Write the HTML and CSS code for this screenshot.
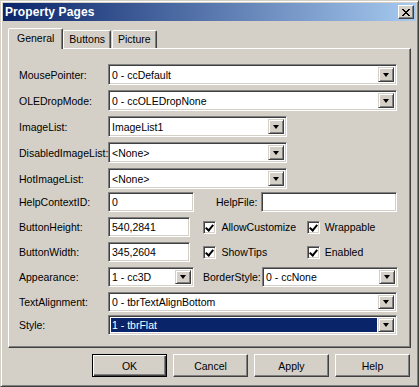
FILE: index.html
```html
<!DOCTYPE html>
<html lang="en">
<head>
  <meta charset="UTF-8" />
  <title>Property Pages</title>
  <link rel="stylesheet" href="styles.css">
</head>
<body>
  <div class="window">
    <div class="titlebar">
      <span class="title">Property Pages</span>
      <div class="close">
        <svg width="8" height="7" viewBox="0 0 8 7" shape-rendering="crispEdges">
          <path d="M0 0h2v1h-2zM6 0h2v1h-2zM1 1h2v1h-2zM5 1h2v1h-2zM2 2h4v1h-4zM3 3h2v1h-2zM2 4h4v1h-4zM1 5h2v1h-2zM5 5h2v1h-2zM0 6h2v1h-2zM6 6h2v1h-2z" fill="#000"/>
        </svg>
      </div>
    </div>

    <div class="content">
      <div class="tabs">
        <div class="tab active">General</div>
        <div class="tab">Buttons</div>
        <div class="tab">Picture</div>
      </div>

      <div class="panel">
        <div class="row">
          <label class="lbl">MousePointer:</label>
          <div class="field combo w-full"><span class="val">0 - ccDefault</span><span class="drop"></span></div>
        </div>
        <div class="row">
          <label class="lbl">OLEDropMode:</label>
          <div class="field combo w-full"><span class="val">0 - ccOLEDropNone</span><span class="drop"></span></div>
        </div>
        <div class="row">
          <label class="lbl">ImageList:</label>
          <div class="field combo w-mid"><span class="val">ImageList1</span><span class="drop"></span></div>
        </div>
        <div class="row">
          <label class="lbl">DisabledImageList:</label>
          <div class="field combo w-mid"><span class="val">&lt;None&gt;</span><span class="drop"></span></div>
        </div>
        <div class="row">
          <label class="lbl">HotImageList:</label>
          <div class="field combo w-mid"><span class="val">&lt;None&gt;</span><span class="drop"></span></div>
        </div>
        <div class="row short pull">
          <label class="lbl">HelpContextID:</label>
          <div class="field w-small"><span class="val">0</span></div>
          <label class="lbl-mid">HelpFile:</label>
          <div class="field w-right"><span class="val"></span></div>
        </div>
        <div class="row short">
          <label class="lbl">ButtonHeight:</label>
          <div class="field w-small"><span class="val">540,2841</span></div>
          <div class="check first"><span class="box"></span>AllowCustomize</div>
          <div class="check"><span class="box"></span>Wrappable</div>
        </div>
        <div class="row short">
          <label class="lbl">ButtonWidth:</label>
          <div class="field w-small"><span class="val">345,2604</span></div>
          <div class="check first"><span class="box"></span>ShowTips</div>
          <div class="check"><span class="box"></span>Enabled</div>
        </div>
        <div class="row short">
          <label class="lbl">Appearance:</label>
          <div class="field combo w-small"><span class="val">1 - cc3D</span><span class="drop"></span></div>
          <label class="lbl-border">BorderStyle:</label>
          <div class="field combo w-right"><span class="val">0 - ccNone</span><span class="drop"></span></div>
        </div>
        <div class="row short">
          <label class="lbl">TextAlignment:</label>
          <div class="field combo w-full"><span class="val">0 - tbrTextAlignBottom</span><span class="drop"></span></div>
        </div>
        <div class="row short pull">
          <label class="lbl">Style:</label>
          <div class="field combo w-full"><span class="val selected">1 - tbrFlat</span><span class="drop"></span></div>
        </div>
      </div>

      <div class="actions">
        <button class="btn default">OK</button>
        <button class="btn">Cancel</button>
        <button class="btn">Apply</button>
        <button class="btn">Help</button>
      </div>
    </div>
  </div>
</body>
</html>
```

FILE: styles.css
```css
* {
  margin: 0;
  padding: 0;
  box-sizing: border-box;
}

body {
  background: #d4d0c8;
  font-family: 'Liberation Sans', Arial, sans-serif;
  font-size: 10.5px;
  color: #000;
}

.window {
  width: 419px;
  height: 387px;
  background: #d4d0c8;
  border: 1px solid;
  border-color: #d4d0c8 #404040 #404040 #d4d0c8;
  box-shadow: inset 1px 1px #fff, inset -1px -1px #808080;
  padding: 2px;
  display: flex;
  flex-direction: column;
}

/* barre de titre */
.titlebar {
  height: 18px;
  background: linear-gradient(90deg, #0a246a, #a6caf0);
  display: flex;
  align-items: center;
  justify-content: space-between;
  padding: 0 2px 0 2px;
}

.title {
  color: #fff;
  font-weight: bold;
  font-size: 12px;
  letter-spacing: 0.1px;
}

.close {
  width: 16px;
  height: 14px;
  background: #d4d0c8;
  border: 1px solid;
  border-color: #fff #404040 #404040 #fff;
  box-shadow: inset -1px -1px #808080;
  display: flex;
  align-items: center;
  justify-content: center;
  padding-right: 1px;
}

.content {
  flex: 1;
  padding: 7px 5px 0 5px;
  display: flex;
  flex-direction: column;
}

/* onglets */
.tabs {
  display: flex;
  height: 20px;
  align-items: flex-start;
  position: relative;
  z-index: 2;
}

.tab {
  height: 18px;
  margin-top: 2px;
  padding: 0 5px;
  line-height: 16px;
  border: 1px solid;
  border-bottom: none;
  border-color: #fff #404040 transparent #fff;
  box-shadow: inset -1px 0 #808080;
  border-radius: 2px 2px 0 0;
  background: #d4d0c8;
  margin-left: 1px;
}

.tab.active {
  height: 21px;
  margin-top: 0;
  padding: 0 8px;
  line-height: 19px;
  margin-left: 0;
  margin-right: -2px;
  position: relative;
  z-index: 3;
}

.tab.active + .tab {
  margin-left: 2px;
}

.panel {
  height: 300px;
  border: 1px solid;
  border-color: #fff #404040 #404040 #fff;
  box-shadow: inset -1px -1px #808080;
  padding: 15px 0 0 10px;
  display: flex;
  flex-direction: column;
  gap: 5px;
}

.row {
  display: flex;
  align-items: center;
  height: 21px;
}

.row.short {
  height: 20px;
}

.row.pull {
  margin-top: -2px;
}

.lbl {
  width: 89px;
  flex-shrink: 0;
  white-space: nowrap;
}

.lbl-mid {
  margin-left: 22px;
  width: 45px;
}

.lbl-border {
  margin-left: 9px;
  width: 59px;
  white-space: nowrap;
}

/* champs */
.field {
  height: 100%;
  background: #fff;
  border: 1px solid;
  border-color: #808080 #fff #fff #808080;
  box-shadow: inset 1px 1px #404040, inset -1px -1px #d4d0c8;
  display: flex;
  align-items: center;
  padding: 2px;
}

.w-full { width: 289px; }
.w-mid { width: 179px; }
.w-small { width: 86px; }
.w-right { width: 136px; }

.val {
  flex: 1;
  height: 100%;
  padding-left: 1px;
  display: flex;
  align-items: center;
  white-space: nowrap;
  overflow: hidden;
}

.val.selected {
  background: #0a246a;
  color: #fff;
  margin-right: 1px;
}

.drop {
  width: 16px;
  height: 100%;
  flex-shrink: 0;
  background: #d4d0c8;
  border: 1px solid;
  border-color: #d4d0c8 #404040 #404040 #d4d0c8;
  box-shadow: inset 1px 1px #fff, inset -1px -1px #808080;
  position: relative;
}

.drop::after {
  content: '';
  position: absolute;
  left: 3.5px;
  top: calc(50% - 2px);
  border-left: 3.5px solid transparent;
  border-right: 3.5px solid transparent;
  border-top: 4px solid #000;
}

/* cases à cocher */
.check {
  display: flex;
  align-items: center;
  width: 108px;
  white-space: nowrap;
}

.check.first {
  margin-left: 13px;
}

.box {
  width: 13px;
  height: 13px;
  margin-right: 5px;
  background: #fff;
  border: 1px solid;
  border-color: #808080 #fff #fff #808080;
  box-shadow: inset 1px 1px #404040, inset -1px -1px #d4d0c8;
  position: relative;
}

.box::after {
  content: '';
  position: absolute;
  left: 3px;
  top: 1px;
  width: 3px;
  height: 6px;
  border: solid #000;
  border-width: 0 2px 2px 0;
  transform: rotate(40deg);
}

/* boutons */
.actions {
  display: flex;
  justify-content: flex-end;
  gap: 6px;
  margin-top: 6px;
  padding-right: 1px;
}

.btn {
  width: 75px;
  height: 23px;
  font-family: inherit;
  font-size: inherit;
  background: #d4d0c8;
  border: 1px solid;
  border-color: #fff #404040 #404040 #fff;
  box-shadow: inset -1px -1px #808080;
}

.btn.default {
  border: 1px solid #000;
  box-shadow: inset 1px 1px #fff, inset -1px -1px #404040, inset -2px -2px #808080;
}
```
